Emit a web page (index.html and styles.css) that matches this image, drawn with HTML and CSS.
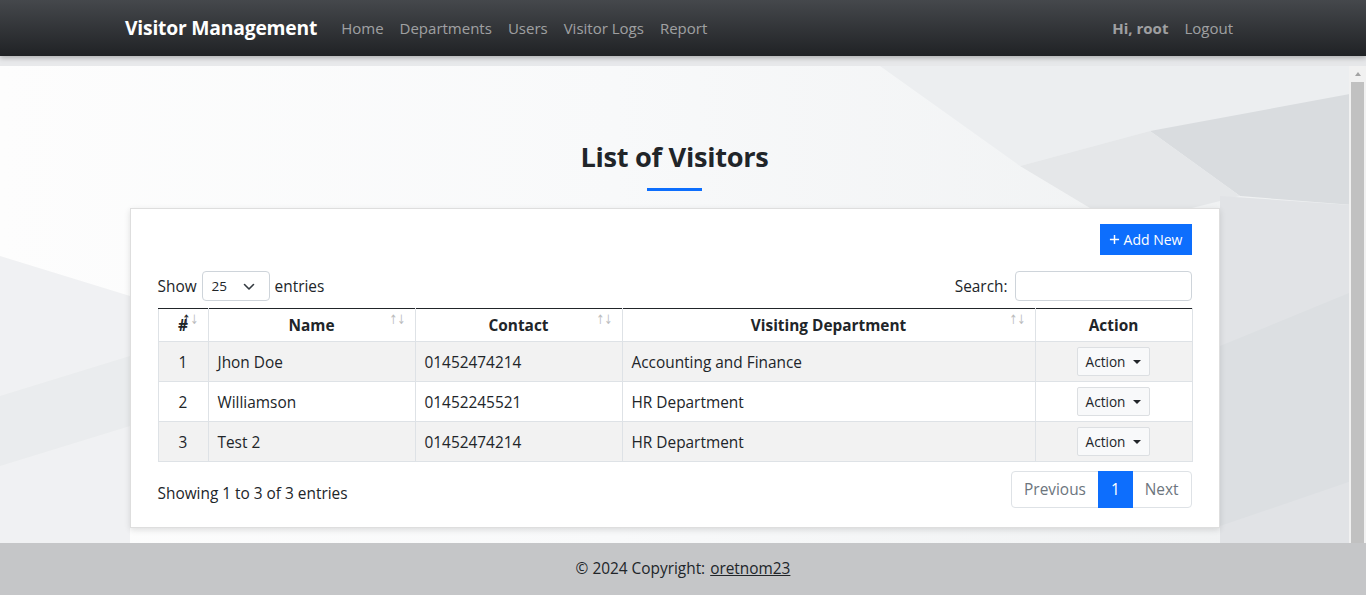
FILE: index.html
```html
<!DOCTYPE html>
<html lang="en">
<head>
<meta charset="utf-8">
<title>Visitor Management</title>
<link rel="stylesheet" href="styles.css">
</head>
<body>
<nav class="navbar">
  <div class="nav-container">
    <a class="brand" href="#">Visitor Management</a>
    <ul class="nav-links">
      <li><a href="#">Home</a></li>
      <li><a href="#">Departments</a></li>
      <li><a href="#">Users</a></li>
      <li><a href="#">Visitor Logs</a></li>
      <li><a href="#">Report</a></li>
    </ul>
    <div class="nav-right">
      <span class="greet">Hi, root</span>
      <a href="#">Logout</a>
    </div>
  </div>
</nav>
<main class="page">
  <svg class="bg" viewBox="0 0 1366 487" preserveAspectRatio="none" aria-hidden="true">
    <polygon points="880,10 1366,10 1366,40 1150,75 1020,110" fill="#eceef0"/>
    <polygon points="1150,75 1366,35 1366,150 1240,140" fill="#d9dcdf"/>
    <polygon points="1020,110 1150,75 1240,140 1120,170" fill="#e5e7e9"/>
    <polygon points="1220,140 1366,150 1366,487 1220,487" fill="#e1e3e6"/>
    <polygon points="1220,290 1366,230 1366,420 1220,470" fill="#dcdfe2"/>
    <polygon points="0,200 130,240 130,487 0,487" fill="#f0f1f3"/>
    <polygon points="0,340 130,300 130,370 0,410" fill="#eaecee"/>
  </svg>
  <div class="band"></div>
  <div class="viewport">
    <div class="content">
      <h3 class="title">List of Visitors</h3>
      <div class="title-line"></div>
      <section class="card">
        <div class="card-body">
          <div class="toolbar">
            <button class="btn-add" type="button">
              <svg class="plus" viewBox="0 0 12 12" aria-hidden="true"><path d="M6 1v10M1 6h10" stroke="#fff" stroke-width="1.6"/></svg>
              Add New
            </button>
          </div>
          <div class="dt-top">
            <div class="dt-length">
              <span>Show</span>
              <span class="select">25
                <svg class="chev" viewBox="0 0 12 8" aria-hidden="true"><path d="M1.5 1.5l4.5 4.5 4.5-4.5" fill="none" stroke="#343a40" stroke-width="1.6" stroke-linecap="round" stroke-linejoin="round"/></svg>
              </span>
              <span>entries</span>
            </div>
            <div class="dt-search">
              <span>Search:</span>
              <span class="input"></span>
            </div>
          </div>
          <table class="dt">
            <colgroup>
              <col class="c1"><col class="c2"><col class="c3"><col class="c4"><col class="c5">
            </colgroup>
            <thead>
              <tr>
                <th class="sort asc">#</th>
                <th class="sort">Name</th>
                <th class="sort">Contact</th>
                <th class="sort">Visiting Department</th>
                <th>Action</th>
              </tr>
            </thead>
            <tbody>
              <tr class="odd">
                <td class="num">1</td><td>Jhon Doe</td><td>01452474214</td><td>Accounting and Finance</td>
                <td class="act"><button class="btn-action" type="button">Action <span class="caret"></span></button></td>
              </tr>
              <tr>
                <td class="num">2</td><td>Williamson</td><td>01452245521</td><td>HR Department</td>
                <td class="act"><button class="btn-action" type="button">Action <span class="caret"></span></button></td>
              </tr>
              <tr class="odd">
                <td class="num">3</td><td>Test 2</td><td>01452474214</td><td>HR Department</td>
                <td class="act"><button class="btn-action" type="button">Action <span class="caret"></span></button></td>
              </tr>
            </tbody>
          </table>
          <div class="dt-bottom">
            <div class="info">Showing 1 to 3 of 3 entries</div>
            <ul class="pagination">
              <li class="page-item disabled"><a href="#">Previous</a></li>
              <li class="page-item active"><a href="#">1</a></li>
              <li class="page-item disabled"><a href="#">Next</a></li>
            </ul>
          </div>
        </div>
      </section>
    </div>
    <div class="scrollbar">
      <div class="sb-up"><span class="sb-tri"></span></div>
      <div class="sb-thumb"></div>
    </div>
  </div>
</main>
<footer class="footer">© 2024 Copyright: <a href="#">oretnom23</a></footer>
</body>
</html>
```
FILE: styles.css
```css
* { box-sizing: border-box; }
html, body { margin: 0; height: 100%; }
body {
  font-family: "Open Sans", "Noto Sans", "Liberation Sans", sans-serif;
  font-size: 15.4px;
  line-height: 24px;
  color: #212529;
  background: #fff;
  overflow: hidden;
}

/* navbar */
.navbar {
  height: 56px;
  background: linear-gradient(#45484c, #202225);
  position: relative;
  z-index: 3;
  box-shadow: 0 2px 5px rgba(0, 0, 0, .25);
}
.nav-container {
  max-width: 1140px;
  height: 100%;
  margin: 0 auto;
  padding: 0 12px;
  display: flex;
  align-items: center;
}
.brand {
  font-size: 19.3px;
  font-weight: 700;
  color: #fff;
  text-decoration: none;
  margin-right: 16px;
  letter-spacing: -0.2px;
}
.nav-links { list-style: none; margin: 0; padding: 0; display: flex; }
.nav-links a, .nav-right a {
  display: block;
  padding: 8px;
  font-size: 15px;
  color: rgba(255, 255, 255, .55);
  text-decoration: none;
}
.nav-right { margin-left: auto; display: flex; align-items: center; }
.greet { font-weight: 700; font-size: 15px; color: rgba(255, 255, 255, .55); padding: 8px; }

/* page area */
.page {
  position: relative;
  height: 487px;
  background: linear-gradient(90deg, #fdfdfd 0%, #f8f9fa 45%, #eef0f1 100%);
}
.bg { position: absolute; left: 0; top: 0; width: 100%; height: 100%; }
.band { position: relative; height: 10px; background: rgba(228, 229, 231, .85); }
.viewport { position: relative; display: flex; height: 477px; }
.content { flex: 1; overflow: hidden; padding-top: 74px; }

.scrollbar {
  width: 17px;
  background: #f1f1f1;
  padding: 0 2px;
  display: flex;
  flex-direction: column;
}
.sb-up { height: 16px; display: flex; justify-content: center; align-items: center; }
.sb-tri {
  width: 0; height: 0;
  border-left: 3.5px solid transparent;
  border-right: 3.5px solid transparent;
  border-bottom: 4px solid #a3a3a3;
}
.sb-thumb { flex: 1; background: #c1c1c1; }

.title {
  margin: 0;
  text-align: center;
  font-size: 27.2px;
  font-weight: 700;
  line-height: 34px;
  letter-spacing: -0.3px;
}
.title-line {
  width: 55px;
  height: 3px;
  background: #0d6efd;
  margin: 14px auto 17px;
}

/* card */
.card {
  width: 1090px;
  margin: 0 auto;
  background: #fff;
  border: 1px solid rgba(0, 0, 0, .13);
  box-shadow: 0 2px 6px rgba(0, 0, 0, .12);
}
.card-body { padding: 15px 27px 19px; }
.toolbar { display: flex; justify-content: flex-end; }
.btn-add {
  height: 31px;
  width: 92px;
  border: 0;
  border-radius: 0;
  background: #0d6efd;
  color: #fff;
  font-family: inherit;
  font-size: 14px;
  display: flex;
  align-items: center;
  justify-content: center;
  gap: 4px;
  padding: 0;
}
.plus { width: 11px; height: 11px; }

.dt-top {
  margin-top: 16px;
  display: flex;
  justify-content: space-between;
  align-items: center;
  height: 30px;
}
.dt-length, .dt-search { display: flex; align-items: center; gap: 5px; padding-top: 1px; }
.dt-search { gap: 7px; }
.select {
  width: 68px;
  height: 30px;
  border: 1px solid #ced4da;
  border-radius: 4px;
  font-size: 13.5px;
  padding-left: 9px;
  display: flex;
  align-items: center;
  position: relative;
  background: #fff;
  margin-top: -1px;
}
.chev { width: 12px; height: 8px; position: absolute; right: 14px; top: 11px; }
.input {
  width: 177px;
  height: 30px;
  border: 1px solid #ced4da;
  border-radius: 4px;
  background: #fff;
  margin-top: -1px;
}

/* table */
.dt {
  width: 100%;
  margin-top: 7px;
  border-collapse: collapse;
  table-layout: fixed;
}
.c1 { width: 50px; } .c2 { width: 207px; } .c3 { width: 207px; } .c4 { width: 413px; } .c5 { width: 157px; }
.dt th, .dt td { border: 1px solid #dee2e6; }
.dt th {
  border-top: 1px solid #212529;
  font-weight: 700;
  text-align: center;
  padding: 5px 10px 4px;
  line-height: 23px;
  position: relative;
  background: #fff;
}
.dt td { padding: 8px 9px 7px; line-height: 23px; }
.dt tr.odd td { background: #f2f2f2; }
.dt tbody tr:not(.odd) td { background: #fff; }
.dt td.num { text-align: center; }
.dt td.act { text-align: center; padding: 5px 9px; }
.sort::before, .sort::after {
  position: absolute;
  top: 3px;
  font-family: "DejaVu Sans", sans-serif;
  font-size: 13px;
  line-height: 16px;
  font-weight: 400;
  color: #212529;
  opacity: .3;
  transform: scaleX(.75);
}
.sort::before { content: "\2191"; right: 16px; }
.sort::after { content: "\2193"; right: 8px; }
.sort.asc::before { opacity: 1; }

.btn-action {
  height: 29px;
  padding: 0 8px;
  background: #f8f9fa;
  border: 1px solid #dcdfe2;
  border-radius: 2px;
  font-family: inherit;
  font-size: 13.6px;
  color: #212529;
  display: inline-flex;
  align-items: center;
  gap: 4px;
}
.caret {
  display: inline-block;
  width: 0; height: 0;
  border-left: 4px solid transparent;
  border-right: 4px solid transparent;
  border-top: 4.5px solid #212529;
  margin-left: 4px;
}

.dt-bottom {
  display: flex;
  justify-content: space-between;
  align-items: flex-start;
  margin-top: 9px;
}
.info { padding-top: 11px; }
.pagination {
  list-style: none;
  margin: 0;
  padding: 0;
  display: flex;
}
.page-item a {
  display: block;
  padding: 6px 12px;
  line-height: 23px;
  border: 1px solid #dee2e6;
  margin-left: -1px;
  text-decoration: none;
  color: #0d6efd;
  background: #fff;
}
.page-item:first-child a { border-radius: 4px 0 0 4px; margin-left: 0; }
.page-item:last-child a { border-radius: 0 4px 4px 0; }
.page-item.disabled a { color: #6c757d; }
.page-item.active a { background: #0d6efd; border-color: #0d6efd; color: #fff; position: relative; }

/* footer */
.footer {
  height: 52px;
  background: #c5c6c8;
  display: flex;
  align-items: center;
  justify-content: center;
  position: relative;
  gap: 5px;
}
.footer a { color: #212529; text-decoration: underline; }
```
